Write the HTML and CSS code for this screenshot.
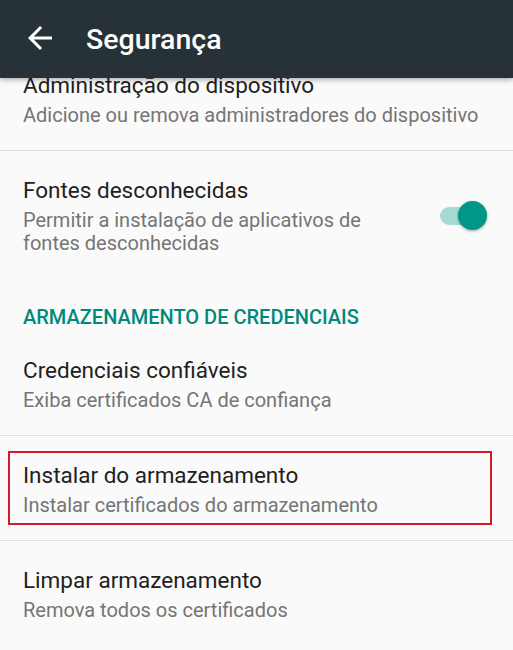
FILE: index.html
```html
<!DOCTYPE html>
<html lang="pt-BR">
<head>
    <meta charset="UTF-8">
    <meta name="viewport" content="width=device-width, initial-scale=1.0">
    <title>Segurança</title>
    <link rel="stylesheet" href="styles.css">
</head>
<body>
    <div class="screen">
        <div class="appbar">
            <svg class="back" viewBox="0 0 24 24" width="36" height="36">
                <path fill="#fff" d="M20 11H7.83l5.59-5.59L12 4l-8 8 8 8 1.41-1.41L7.83 13H20v-2z"/>
            </svg>
            <h1 class="title">Segurança</h1>
        </div>
        <div class="list">
            <div class="item divided">
                <div class="text">
                    <div class="item-title">Administração do dispositivo</div>
                    <div class="item-sub">Adicione ou remova administradores do dispositivo</div>
                </div>
            </div>
            <div class="item">
                <div class="text narrow">
                    <div class="item-title">Fontes desconhecidas</div>
                    <div class="item-sub">Permitir a instalação de aplicativos de fontes desconhecidas</div>
                </div>
                <div class="switch">
                    <div class="track"></div>
                    <div class="thumb"></div>
                </div>
            </div>
            <div class="category">ARMAZENAMENTO DE CREDENCIAIS</div>
            <div class="item divided">
                <div class="text">
                    <div class="item-title">Credenciais confiáveis</div>
                    <div class="item-sub">Exiba certificados CA de confiança</div>
                </div>
            </div>
            <div class="item divided">
                <div class="text">
                    <div class="item-title">Instalar do armazenamento</div>
                    <div class="item-sub">Instalar certificados do armazenamento</div>
                </div>
                <div class="highlight"></div>
            </div>
            <div class="item">
                <div class="text">
                    <div class="item-title">Limpar armazenamento</div>
                    <div class="item-sub">Remova todos os certificados</div>
                </div>
            </div>
        </div>
    </div>
</body>
</html>
```

FILE: styles.css
```css
body {
    margin: 0;
    padding: 0;
    font-family: Roboto, "Noto Sans", sans-serif;
    background-color: #fafafa;
}
.screen {
    width: 513px;
    height: 650px;
    overflow: hidden;
    background-color: #fafafa;
}
.appbar {
    position: relative;
    z-index: 2;
    height: 78px;
    display: flex;
    align-items: center;
    background-color: #263238;
    box-shadow: 0 2px 5px rgba(0, 0, 0, 0.3);
}
.back {
    margin-left: 22px;
    margin-top: -2px;
}
.title {
    margin: 0 0 0 28px;
    color: #fff;
    font-size: 28.5px;
    font-weight: 500;
}
.list {
    margin-top: -32px;
}
.item {
    position: relative;
    display: flex;
    align-items: center;
    padding: 25px 26px 23px 23px;
}
.divided {
    border-bottom: 1px solid #dedede;
}
.text {
    flex: 1;
}
.narrow {
    max-width: 370px;
}
.item-title {
    font-size: 22.5px;
    line-height: 29px;
    color: #212121;
}
.item-sub {
    margin-top: 4px;
    font-size: 20px;
    line-height: 23px;
    color: #757575;
}
.category {
    padding: 27px 23px 2px;
    font-size: 20px;
    line-height: 24px;
    font-weight: 500;
    color: #00897b;
}
.switch {
    position: relative;
    width: 47px;
    height: 30px;
    margin-left: auto;
    margin-top: 1px;
}
.track {
    margin: 6px 0 0 0;
    width: 40px;
    height: 18px;
    border-radius: 9px;
    background-color: #a6dbd4;
}
.thumb {
    position: absolute;
    top: 0;
    right: 0;
    width: 29px;
    height: 29px;
    border-radius: 50%;
    background-color: #009688;
    box-shadow: 0 1px 3px rgba(0, 0, 0, 0.35);
}
.highlight {
    position: absolute;
    left: 8px;
    top: 15px;
    width: 480px;
    height: 70px;
    border: 2px solid #d11a2a;
}
```
